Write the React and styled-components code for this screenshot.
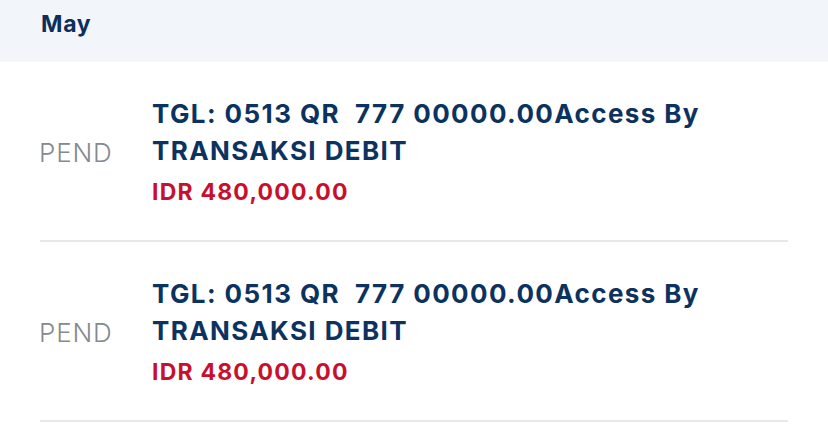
import React from "react";
import styled, { createGlobalStyle } from "styled-components";

const Global = createGlobalStyle`
  html, body { margin: 0; padding: 0; background: #ffffff; }
  body { font-family: Inter, "Noto Sans", sans-serif; -webkit-font-smoothing: antialiased; }
`;

const Page = styled.div`
  width: 828px;
  height: 441px;
  overflow: hidden;
  background: #ffffff;
`;

const MonthHeader = styled.div`
  height: 62px;
  background: #f2f5fa;
  display: flex;
  align-items: center;
  padding: 0 0 0 41px;
  box-sizing: border-box;
  border-bottom: 1px solid #f6f8fb;
`;

const MonthTitle = styled.h2`
  margin: 0 0 14px 0;
  font-size: 23px;
  font-weight: 700;
  letter-spacing: 0.7px;
  color: #0c2f5a;
`;

const Row = styled.div`
  margin: 0 40px;
  height: 180px;
  box-sizing: border-box;
  border-bottom: 2px solid #e8e8e8;
  display: flex;
  align-items: center;
`;

const Status = styled.div`
  width: 113px;
  margin-left: -1px;
  flex-shrink: 0;
  font-size: 26px;
  font-weight: 300;
  letter-spacing: 0.8px;
  color: #86898d;
  padding-top: 2px;
`;

const Details = styled.div`
  display: flex;
  flex-direction: column;
  flex: 1;
`;

const Title = styled.div`
  font-size: 26px;
  font-weight: 700;
  line-height: 37px;
  letter-spacing: 1.4px;
  color: #0c3360;
  white-space: pre-wrap;
`;

const Amount = styled.div`
  margin-top: 7px;
  font-size: 23px;
  font-weight: 700;
  line-height: 32px;
  letter-spacing: 1.2px;
  color: #c8102e;
`;

const items = [
  { status: "PEND", title: "TGL: 0513 QR  777 00000.00Access By TRANSAKSI DEBIT", amount: "IDR 480,000.00" },
  { status: "PEND", title: "TGL: 0513 QR  777 00000.00Access By TRANSAKSI DEBIT", amount: "IDR 480,000.00" },
];

export default function App() {
  return (
    <Page>
      <Global />
      <MonthHeader>
        <MonthTitle>May</MonthTitle>
      </MonthHeader>
      {items.map((it, i) => (
        <Row key={i}>
          <Status>{it.status}</Status>
          <Details>
            <Title>{it.title}</Title>
            <Amount>{it.amount}</Amount>
          </Details>
        </Row>
      ))}
    </Page>
  );
}
